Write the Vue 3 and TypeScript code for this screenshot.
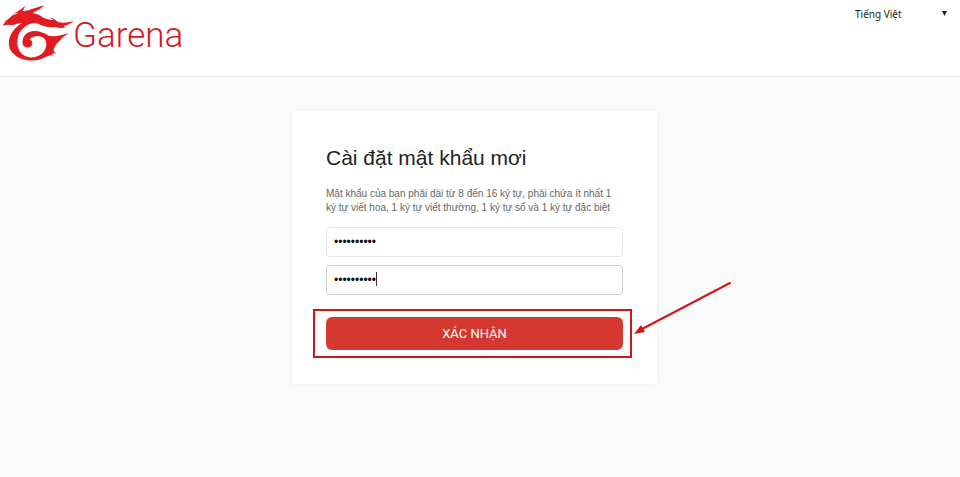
<script setup lang="ts">
import { ref } from 'vue'

const language = ref('vi')
const password = ref('Matkhau@12')
const confirmation = ref('Matkhau@12')
</script>

<template>
  <div class="page">
    <header class="header">
      <a class="brand" href="#" aria-label="Garena">
        <svg class="emblem" viewBox="0 0 225 186" aria-hidden="true">
          <path d="M8 77 L17 63 L31 52 L37 46 L56 40 L40 40 Q57 34 76 17 Q71 28 67 34 Q84 33 96 27 L132 16 Q123 27 109 33 L98 39 Q116 42 127 51 Q138 59 160 60 L149 52 Q163 55 174 66 Q192 71 221 63 Q208 75 190 78 L198 82 Q182 86 166 81 Q144 84 124 76 Q108 66 91 71 Q70 79 58 99 Q48 119 54 142 Q61 168 88 172 Q118 174 133 153 Q143 135 136 120 Q128 107 109 108 Q94 110 89 119 Q99 122 97 133 Q93 144 80 142 Q67 139 67 125 Q69 105 86 97 Q104 90 122 96 Q135 100 146 107 Q170 112 207 99 Q187 111 176 125 Q161 140 161 151 Q161 157 168 160 L155 161 L161 166 Q149 164 138 170 Q114 184 82 181 Q45 176 30 148 Q21 122 35 99 Q45 82 66 69 Q51 70 37 76 Q28 72 8 77 Z" />
        </svg>
        <span class="wordmark">Garena</span>
      </a>
      <div class="language">
        <select v-model="language" aria-label="Ngôn ngữ">
          <option value="vi">Tiếng Việt</option>
          <option value="en">English</option>
        </select>
        <svg class="chevron" viewBox="0 0 5 5" aria-hidden="true"><path d="M0 0H5L2.5 5Z" /></svg>
      </div>
    </header>

    <main class="main">
      <form class="card" @submit.prevent>
        <h1>Cài đặt mật khẩu mơi</h1>
        <p id="rules">Mật khẩu của bạn phải dài từ 8 đến 16 ký tự, phải chứa ít nhất 1<br />ký tự viết hoa, 1 ký tự viết thường, 1 ký tự số và 1 ký tự đặc biệt</p>
        <div class="field">
          <input v-model="password" type="password" aria-label="Mật khẩu mới" aria-describedby="rules" />
        </div>
        <div class="field active">
          <input v-model="confirmation" type="password" aria-label="Xác nhận mật khẩu mới" />
          <span class="caret"></span>
        </div>
        <div class="action">
          <button type="submit">XÁC NHẬN</button>
          <span class="outline"></span>
          <svg class="arrow" viewBox="0 0 98 54" aria-hidden="true">
            <path class="shaft" d="M96 2L8 48" />
            <path class="head" d="M0 53L7 44L11 51Z" />
          </svg>
        </div>
      </form>
    </main>
  </div>
</template>

<style>
body {
  background: #fafafa;
}
</style>

<style scoped>
.page {
  min-height: 100vh;
  color: #222;
  font-family: "Liberation Sans", Arial, sans-serif;
}

.header {
  display: flex;
  justify-content: space-between;
  align-items: flex-start;
  box-sizing: border-box;
  height: 77px;
  padding-right: 12px;
  border-bottom: 1px solid #e6e6e6;
  background: #fff;
}

.brand {
  display: flex;
  align-items: flex-start;
  color: #d4191f;
  text-decoration: none;
}

.emblem {
  width: 75px;
  height: 62px;
  fill: #e01b22;
}

.wordmark {
  margin-left: -2px;
  padding-top: 14px;
  font-family: Roboto, "Liberation Sans", sans-serif;
  font-size: 35px;
  font-weight: 300;
  line-height: 44px;
}

.language {
  position: relative;
  padding-top: 4px;
}

.language select {
  width: 93px;
  height: 20px;
  padding: 0;
  border: 0;
  background: transparent;
  color: #222;
  font: 10px/20px "Noto Sans", sans-serif;
  appearance: none;
}

.chevron {
  position: absolute;
  top: 11px;
  right: 1px;
  width: 5px;
  height: 5px;
  fill: #222;
  pointer-events: none;
}

.main {
  display: flex;
  justify-content: center;
  padding: 34px 11px 34px 0;
}

.card {
  box-sizing: border-box;
  width: 365px;
  padding: 34px;
  background: #fff;
  box-shadow: 0 0 6px rgba(0, 0, 0, 0.05);
}

h1 {
  margin: 0;
  font-size: 21px;
  font-weight: 400;
  line-height: 26px;
}

p {
  margin: 16px 0 12px;
  color: #666;
  font-size: 10px;
  line-height: 14px;
  white-space: nowrap;
}

.field {
  position: relative;
  margin-bottom: 8px;
}

.field input {
  display: block;
  box-sizing: border-box;
  width: 100%;
  height: 30px;
  padding: 0 7px;
  border: 1px solid #e6e6e6;
  border-radius: 4px;
  outline: 0;
  background: #fff;
  color: #111;
  font: 12px "Liberation Sans", Arial, sans-serif;
}

.active input {
  border-color: #ccc;
}

.caret {
  position: absolute;
  top: 7px;
  left: 50px;
  width: 1px;
  height: 14px;
  background: #333;
}

.action {
  position: relative;
  margin-top: 22px;
}

button {
  display: block;
  width: 100%;
  height: 33px;
  padding: 0;
  border: 0;
  border-radius: 6px;
  background: #d43831;
  color: #fff;
  font: 13px Roboto, "Liberation Sans", sans-serif;
}

.outline {
  position: absolute;
  inset: -8px -9px -8px -13px;
  border: 2px solid #cc1a1a;
  pointer-events: none;
}

.arrow {
  position: absolute;
  top: -36px;
  left: calc(100% + 11px);
  width: 98px;
  height: 54px;
  pointer-events: none;
}

.shaft {
  fill: none;
  stroke: #cf1717;
  stroke-width: 2;
  stroke-linecap: round;
}

.head {
  fill: #cf1717;
}
</style>
